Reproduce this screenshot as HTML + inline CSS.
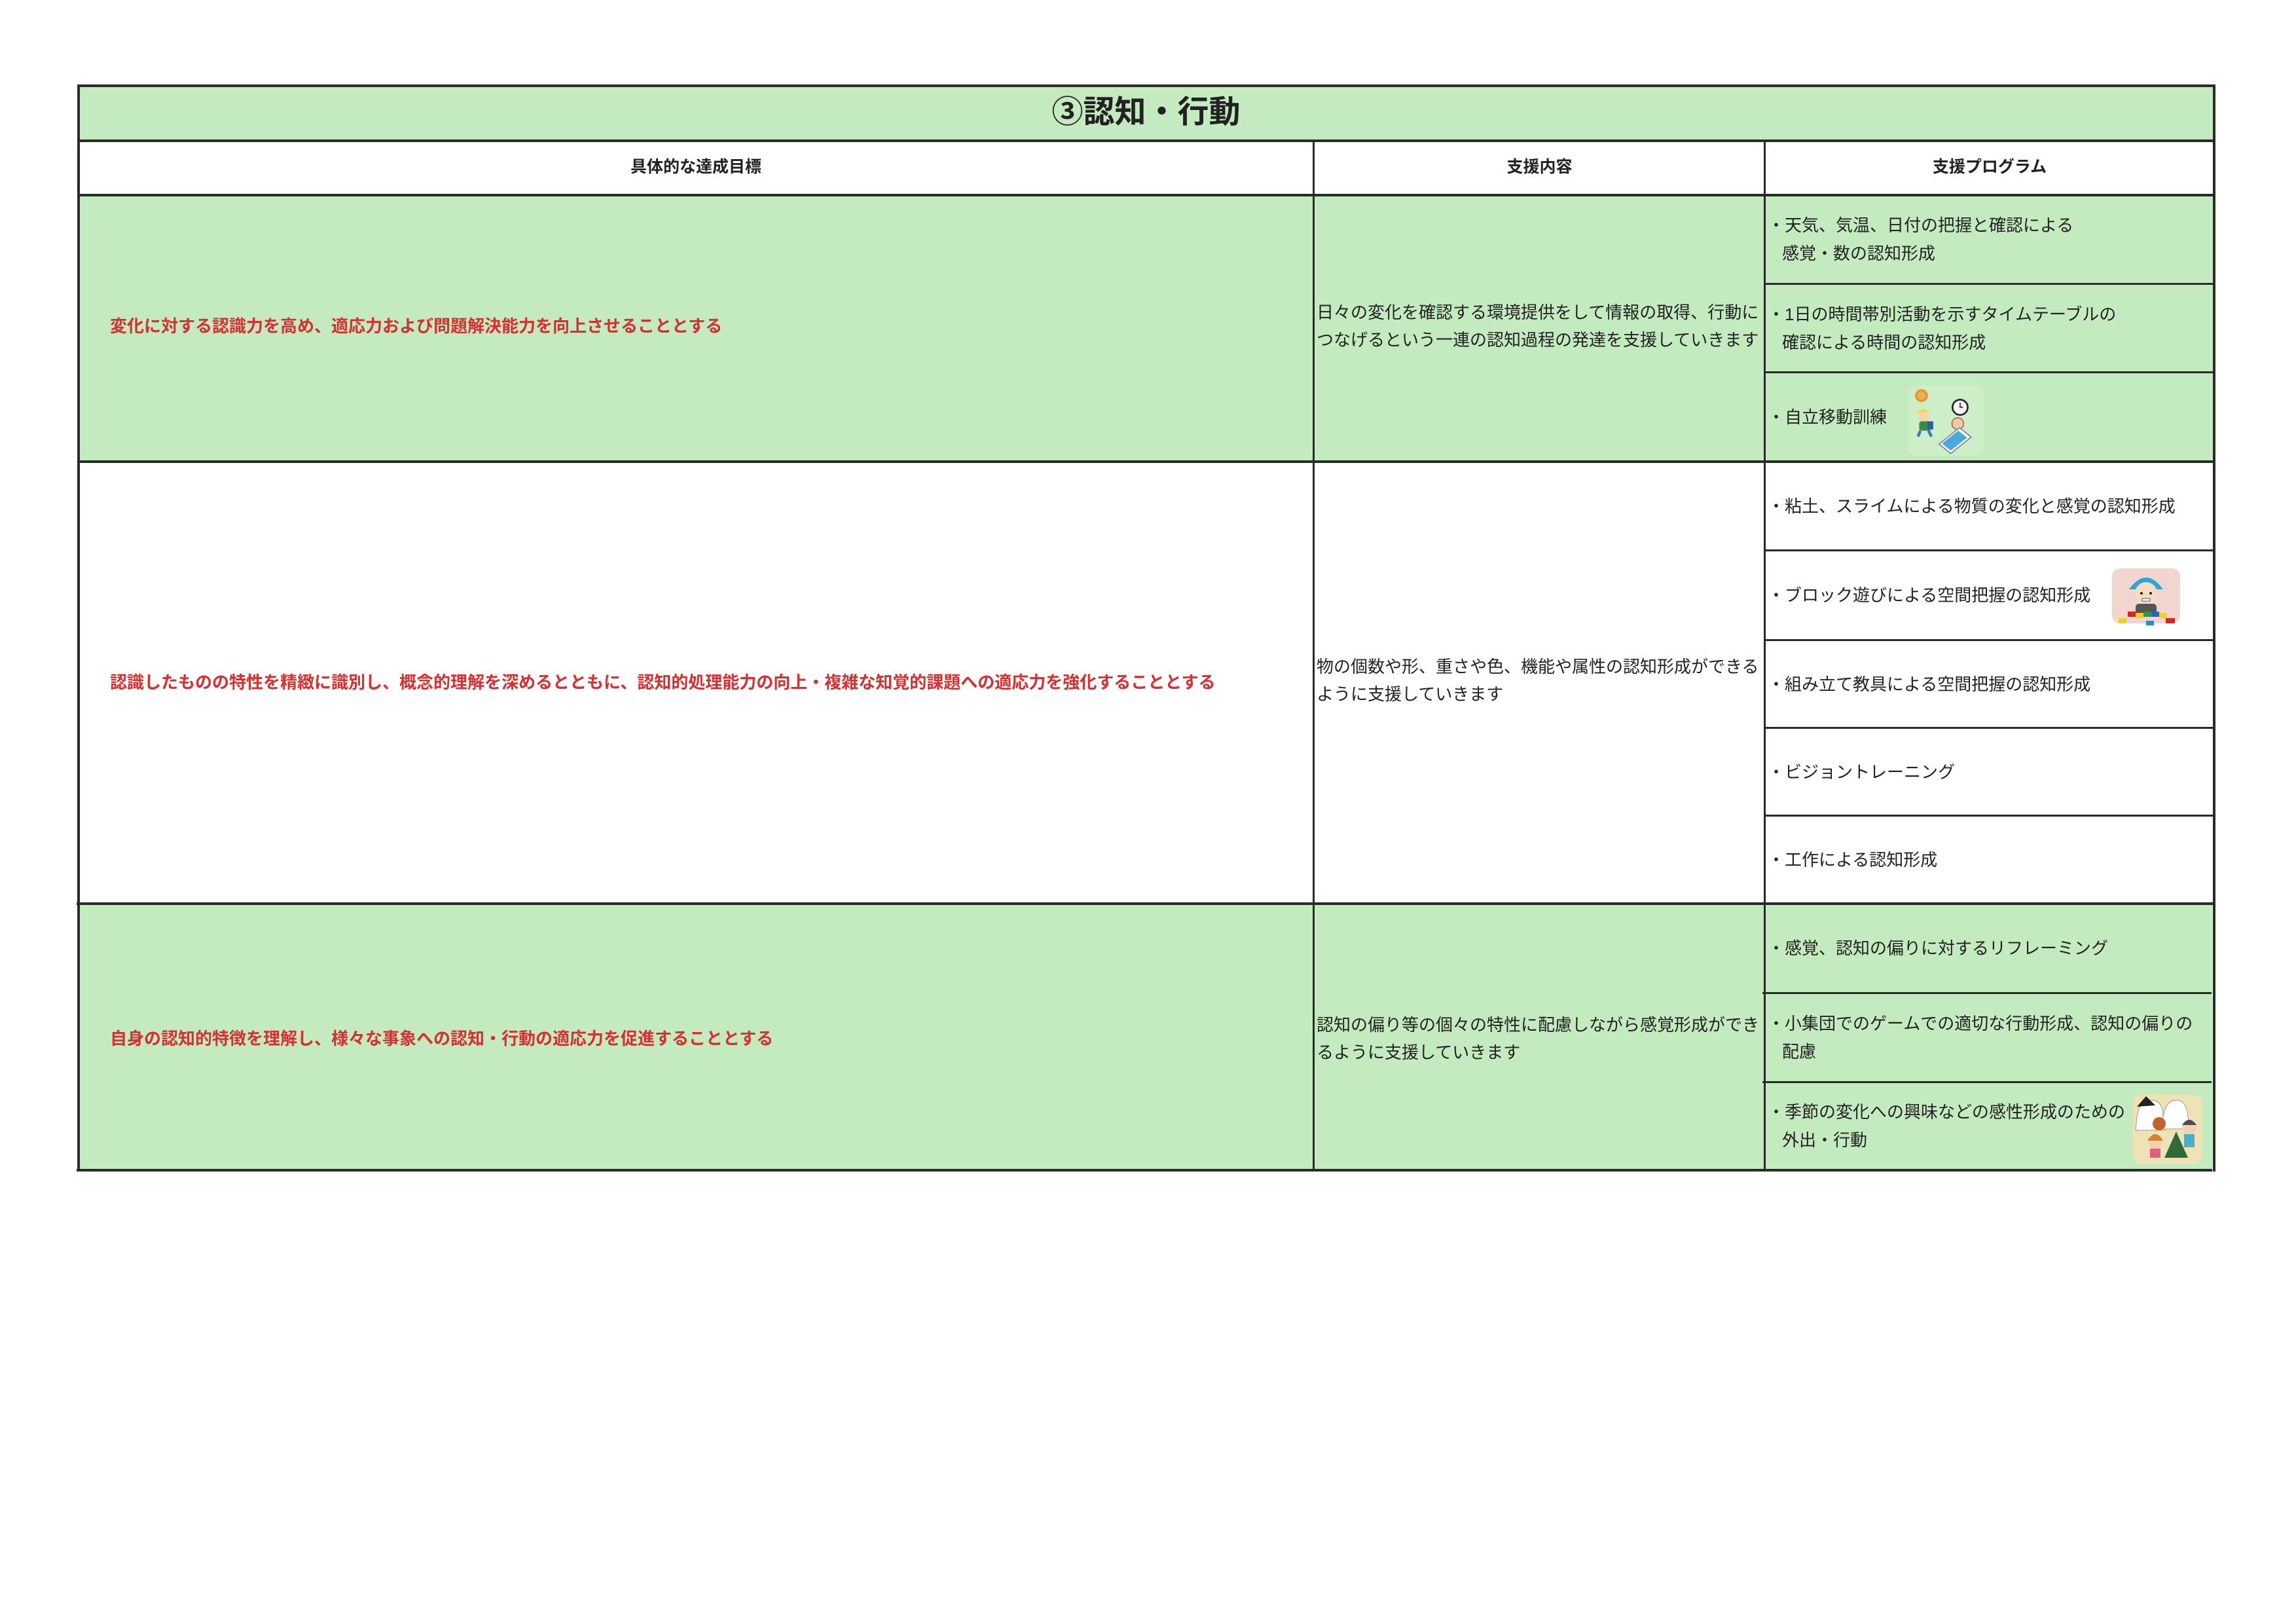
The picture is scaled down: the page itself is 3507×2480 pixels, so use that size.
<!DOCTYPE html>
<html><head><meta charset="utf-8">
<style>
*{margin:0;padding:0;box-sizing:border-box}
body{width:3507px;height:2480px;background:#fff;position:relative;overflow:hidden;font-family:"Liberation Sans","Noto Sans CJK JP",sans-serif;color:#222}
.a{position:absolute}
.g{background:#c4ebbf}
.h{position:absolute;background:#2a2a2a;height:4px}
.v{position:absolute;background:#2a2a2a;width:4px}
.t{position:absolute;font-size:26px;line-height:42px;white-space:nowrap}
.p{position:absolute;left:2700px;width:660px;display:flex;align-items:center;font-size:26px;line-height:43px;white-space:nowrap}
.p div{padding-left:22px;text-indent:-22px}
.r{position:absolute;left:168px;color:#d83030;font-weight:bold;font-size:26px;white-space:nowrap;line-height:40px}
.hd{position:absolute;font-weight:bold;font-size:25px;text-align:center;line-height:40px}
</style></head><body>
<div class="a g" style="left:119px;top:130px;width:3263px;height:86px"></div>
<div class="a g" style="left:119px;top:298px;width:3263px;height:407px"></div>
<div class="a g" style="left:119px;top:1380px;width:3260px;height:407px"></div>

<div class="h" style="left:119px;top:129px;width:3264px"></div>
<div class="h" style="left:119px;top:213px;width:3264px"></div>
<div class="h" style="left:119px;top:296px;width:3264px"></div>
<div class="h" style="left:119px;top:703px;width:3264px"></div>
<div class="h" style="left:117px;top:1378px;width:3264px"></div>
<div class="h" style="left:117px;top:1785px;width:3262px"></div>
<div class="h" style="left:2696px;top:432px;width:686px;height:3px"></div>
<div class="h" style="left:2696px;top:567px;width:686px;height:3px"></div>
<div class="h" style="left:2694px;top:839px;width:686px;height:3px"></div>
<div class="h" style="left:2694px;top:976px;width:686px;height:3px"></div>
<div class="h" style="left:2694px;top:1110px;width:686px;height:3px"></div>
<div class="h" style="left:2694px;top:1244px;width:686px;height:3px"></div>
<div class="h" style="left:2692px;top:1515px;width:686px;height:3px"></div>
<div class="h" style="left:2692px;top:1651px;width:686px;height:3px"></div>

<div class="v" style="left:118px;top:129px;height:1660px"></div>
<div class="v" style="left:3380px;top:129px;height:1660px"></div>
<div class="v" style="left:2005px;top:213px;height:1575px;width:3px"></div>
<div class="v" style="left:2694px;top:213px;height:1575px;width:3px"></div>

<div class="a" style="left:119px;top:130px;width:3263px;height:84px;text-align:center;font-size:48px;font-weight:bold;line-height:84px;color:#222">③認知・行動</div>

<div class="hd" style="left:119px;top:235px;width:1888px">具体的な達成目標</div>
<div class="hd" style="left:2007px;top:235px;width:689px">支援内容</div>
<div class="hd" style="left:2696px;top:235px;width:686px">支援プログラム</div>

<div class="r" style="top:478px">変化に対する認識力を高め、適応力および問題解決能力を向上させることとする</div>
<div class="r" style="top:1022px">認識したものの特性を精緻に識別し、概念的理解を深めるとともに、認知的処理能力の向上・複雑な知覚的課題への適応力を強化することとする</div>
<div class="r" style="top:1566px">自身の認知的特徴を理解し、様々な事象への認知・行動の適応力を促進することとする</div>

<div class="t" style="left:2011px;top:456px">日々の変化を確認する環境提供をして情報の取得、行動に<br>つなげるという一連の認知過程の発達を支援していきます</div>
<div class="t" style="left:2011px;top:997px">物の個数や形、重さや色、機能や属性の認知形成ができる<br>ように支援していきます</div>
<div class="t" style="left:2011px;top:1544px">認知の偏り等の個々の特性に配慮しながら感覚形成ができ<br>るように支援していきます</div>

<div class="p" style="top:299px;height:134px"><div>・天気、気温、日付の把握と確認による<br>感覚・数の認知形成</div></div>
<div class="p" style="top:435px;height:133px"><div>・1日の時間帯別活動を示すタイムテーブルの<br>確認による時間の認知形成</div></div>
<div class="p" style="top:570px;height:134px"><div>・自立移動訓練</div></div>
<div class="p" style="top:706px;height:134px"><div>・粘土、スライムによる物質の変化と感覚の認知形成</div></div>
<div class="p" style="top:842px;height:134px"><div>・ブロック遊びによる空間把握の認知形成</div></div>
<div class="p" style="top:979px;height:132px"><div>・組み立て教具による空間把握の認知形成</div></div>
<div class="p" style="top:1113px;height:132px"><div>・ビジョントレーニング</div></div>
<div class="p" style="top:1247px;height:132px"><div>・工作による認知形成</div></div>
<div class="p" style="top:1381px;height:134px"><div>・感覚、認知の偏りに対するリフレーミング</div></div>
<div class="p" style="top:1518px;height:133px"><div>・小集団でのゲームでの適切な行動形成、認知の偏りの<br>配慮</div></div>
<div class="p" style="top:1654px;height:132px"><div>・季節の変化への興味などの感性形成のための<br>外出・行動</div></div>

<svg class="a" style="left:2910px;top:580px" width="125" height="125" viewBox="0 0 140 130">
<rect x="5" y="5" width="130" height="120" rx="14" fill="#cdeec6"/>
<circle cx="28" cy="22" r="11" fill="#e8923a"/><circle cx="28" cy="22" r="7" fill="#f0b050"/>
<path d="M20 52 q10-14 22 0 z" fill="#f2dc30"/>
<circle cx="32" cy="58" r="9" fill="#f6d3b0"/>
<rect x="24" y="66" width="20" height="16" rx="4" fill="#3b8a4a"/>
<rect x="38" y="66" width="10" height="14" fill="#2c5f9e"/>
<path d="M26 82 l-4 10 M40 82 l5 10" stroke="#3a78c0" stroke-width="5"/>
<circle cx="94" cy="42" r="13" fill="#fff" stroke="#223" stroke-width="3"/>
<path d="M94 34 v8 h5" stroke="#c00" stroke-width="2" fill="none"/>
<circle cx="90" cy="70" r="10" fill="#f3c7a8" stroke="#b07050" stroke-width="2"/>
<path d="M58 105 l35 -28 l20 16 l-35 28 z" fill="#fff" stroke="#889" stroke-width="2"/>
<path d="M63 104 l28 -22 l15 12 l-28 22 z" fill="#4aa8e0"/>
</svg>

<svg class="a" style="left:3222px;top:862px" width="112" height="100" viewBox="0 0 112 100">
<rect x="4" y="6" width="104" height="84" rx="12" fill="#f1d6cf"/>
<path d="M30 38 q26-36 52 0 z" fill="#2aa8d8"/>
<circle cx="56" cy="44" r="17" fill="#f7dcc2"/>
<circle cx="49" cy="44" r="2" fill="#222"/><circle cx="63" cy="44" r="2" fill="#222"/>
<rect x="50" y="52" width="12" height="4" fill="#fff" stroke="#555"/>
<rect x="40" y="60" width="32" height="18" rx="5" fill="#555"/>
<rect x="28" y="72" width="12" height="8" fill="#d22"/><rect x="40" y="74" width="12" height="8" fill="#f0d020"/>
<rect x="52" y="72" width="12" height="8" fill="#2a9a3a"/><rect x="64" y="72" width="12" height="8" fill="#2266cc"/>
<rect x="76" y="74" width="12" height="8" fill="#f0d020"/><rect x="14" y="82" width="12" height="8" fill="#f0d020"/>
<rect x="86" y="82" width="14" height="8" fill="#d22"/><rect x="56" y="86" width="12" height="7" fill="#2a8ac0"/>
</svg>

<svg class="a" style="left:3254px;top:1668px" width="114" height="114" viewBox="0 0 114 114">
<rect x="4" y="4" width="106" height="106" rx="14" fill="#efe2b5"/>
<path d="M10 38 q4-26 22-26 q18 0 18 26 l4 20 h-46 z" fill="#fff" stroke="#999"/>
<path d="M10 22 l14 -16 l14 14 z" fill="#222"/>
<path d="M50 38 q4-26 20-26 q16 0 18 26 l4 18 h-42 z" fill="#fff" stroke="#999"/>
<circle cx="44" cy="48" r="10" fill="#c0642a"/>
<circle cx="90" cy="54" r="11" fill="#f3d0b0"/><path d="M79 50 q11-16 22 0" fill="#4a4a5a"/>
<rect x="82" y="64" width="16" height="20" fill="#4ab0c8"/>
<path d="M70 60 l-18 40 h36 z" fill="#2f6a3a"/>
<circle cx="38" cy="76" r="10" fill="#f3d0b0"/><path d="M26 74 q12-20 24 0" fill="#d88030"/>
<rect x="30" y="86" width="16" height="14" fill="#e06080"/>
</svg>
</body></html>
